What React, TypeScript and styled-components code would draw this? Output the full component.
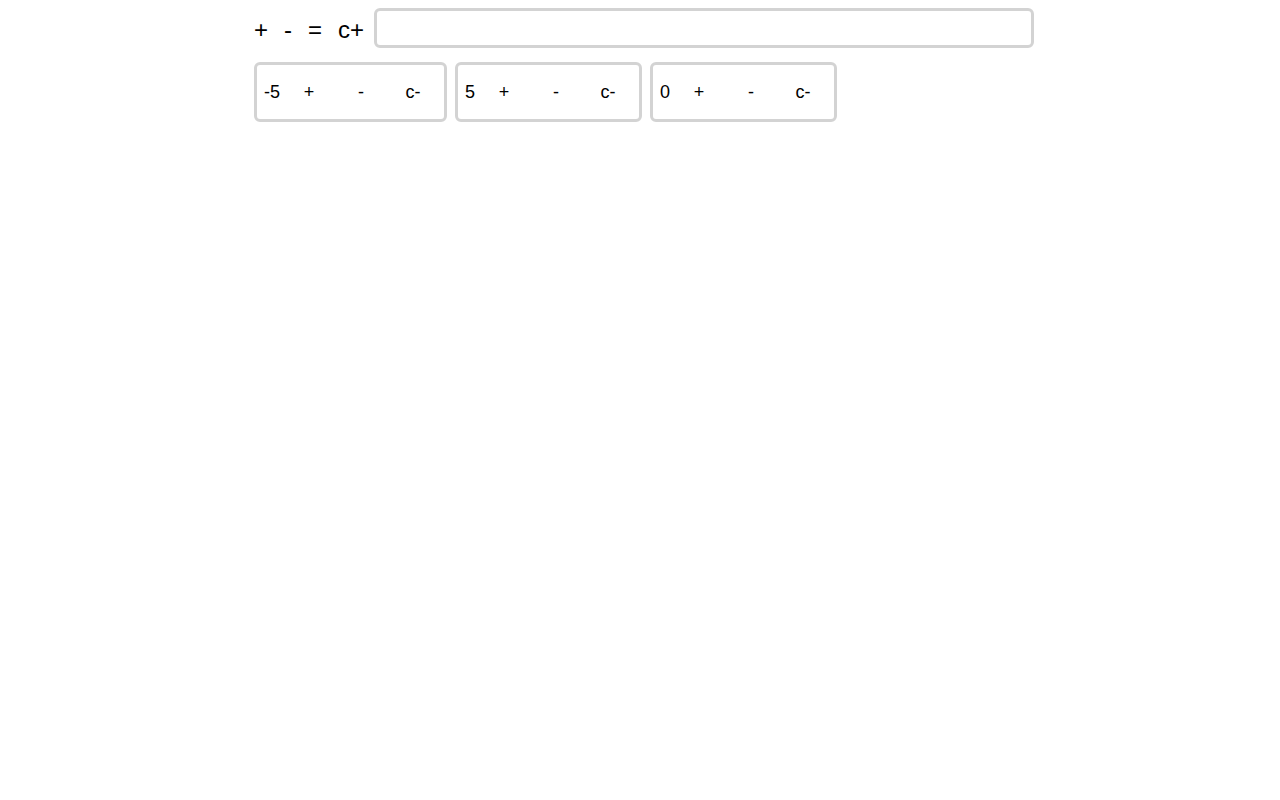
import React from "react";
import styled, { createGlobalStyle } from "styled-components";

const Global = createGlobalStyle`
  html, body { margin: 0; padding: 0; background: #fff; }
  body { font-family: "Liberation Sans", Arial, sans-serif; color: #000; }
`;

const Page = styled.div`
  width: 788px;
  margin: 0 auto;
  padding: 8px 0 0 8px;
  box-sizing: border-box;
`;

const Toolbar = styled.div`
  display: flex;
  align-items: center;
  height: 40px;
`;

const OpButton = styled.button`
  border: none;
  background: none;
  padding: 3px 0 0;
  margin-right: 16px;
  font-family: "Liberation Sans", Arial, sans-serif;
  font-size: 24px;
  line-height: 37px;
  color: #000;
  cursor: pointer;
  &:last-of-type { margin-right: 10px; }
`;

const Input = styled.input`
  flex: 1;
  height: 40px;
  box-sizing: border-box;
  border: 3px solid #d3d3d3;
  border-radius: 6px;
  font-size: 18px;
  outline: none;
`;

const Counters = styled.div`
  display: flex;
  gap: 8px;
  margin-top: 14px;
`;

const Card = styled.div`
  display: flex;
  align-items: center;
  height: 60px;
  box-sizing: border-box;
  border: 3px solid #d3d3d3;
  border-radius: 6px;
  padding: 0 5px 0 7px;
  font-size: 18px;
`;

const Value = styled.span`
  margin-right: 3px;
`;

const CardButton = styled.button`
  width: 52px;
  border: none;
  background: none;
  padding: 0;
  font-family: "Liberation Sans", Arial, sans-serif;
  font-size: 18px;
  color: #000;
  text-align: center;
  cursor: pointer;
`;

const values = [-5, 5, 0];

export default function App() {
  return (
    <>
      <Global />
      <Page>
        <Toolbar>
          <OpButton>+</OpButton>
          <OpButton>-</OpButton>
          <OpButton>=</OpButton>
          <OpButton>c+</OpButton>
          <Input />
        </Toolbar>
        <Counters>
          {values.map((v, i) => (
            <Card key={i}>
              <Value>{v}</Value>
              <CardButton>+</CardButton>
              <CardButton>-</CardButton>
              <CardButton>c-</CardButton>
            </Card>
          ))}
        </Counters>
      </Page>
    </>
  );
}
